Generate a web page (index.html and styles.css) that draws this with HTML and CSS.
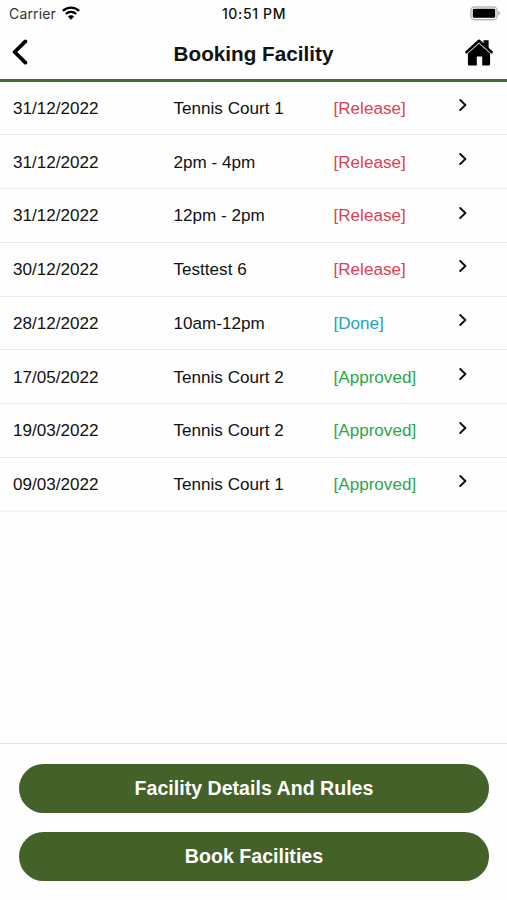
FILE: index.html
```html
<!DOCTYPE html>
<html lang="en">
<head>
    <meta charset="UTF-8">
    <meta name="viewport" content="width=device-width, initial-scale=1.0">
    <title>Booking Facility</title>
    <link rel="stylesheet" href="styles.css">
</head>
<body>

    <div class="status-bar">
        <div class="carrier">
            <span>Carrier</span>
            <svg class="wifi" viewBox="0 0 18 14" width="18" height="14">
                <path d="M.9 4.9a11.6 11.6 0 0 1 16.2 0M3.8 8a7.4 7.4 0 0 1 10.4 0" fill="none" stroke="#000" stroke-width="2.4"/>
                <path d="M5.9 10.5a4.3 4.3 0 0 1 6.2 0L9 13.7z"/>
            </svg>
        </div>
        <span class="time">10:51 PM</span>
        <svg class="battery" viewBox="0 0 31 15" width="31" height="15">
            <rect x="0.9" y="0.9" width="26.2" height="12.8" rx="3.6" fill="#fff" stroke="#b9b9b9" stroke-width="1.5"/>
            <rect x="2.8" y="2.8" width="22.4" height="9" rx="1.4"/>
            <path d="M28.2 5c1.5.5 2.2 1.3 2.2 2.3s-.7 1.8-2.2 2.3z" fill="#b9b9b9"/>
        </svg>
    </div>

    <header class="header">
        <a class="back" href="#" aria-label="Back">
            <svg viewBox="0 0 16 26" width="16" height="26">
                <path d="M13.4 2.4L2.6 13l10.8 10.6" fill="none" stroke="#000" stroke-width="3.8" stroke-linecap="round" stroke-linejoin="round"/>
            </svg>
        </a>
        <h1>Booking Facility</h1>
        <a class="home" href="#" aria-label="Home">
            <svg viewBox="0 0 28 27" width="28" height="27">
                <path d="M2.9 13.8L14 4l11.1 9.8v11.4q0 1.2-1.2 1.2h-6.7v-8.8h-5.4v8.8H4.1q-1.2 0-1.2-1.2z"/>
                <path d="M1.6 14.6L14 3.5l12.4 11.1" fill="none" stroke="#ccc" stroke-width="1.8"/>
                <path d="M18.6 1.2h5v9.2l-5-4.2z"/>
                <path d="M1.4 13.1L14 1.7l12.6 11.4" fill="none" stroke="#000" stroke-width="2.5" stroke-linecap="round" stroke-linejoin="round"/>
            </svg>
        </a>
    </header>

    <main class="bookings" id="bookings"></main>

    <footer class="actions">
        <button type="button">Facility Details And Rules</button>
        <button type="button">Book Facilities</button>
    </footer>

    <script>
        const bookings = [
            { date: '31/12/2022', name: 'Tennis Court 1', status: 'Release' },
            { date: '31/12/2022', name: '2pm - 4pm', status: 'Release' },
            { date: '31/12/2022', name: '12pm - 2pm', status: 'Release' },
            { date: '30/12/2022', name: 'Testtest 6', status: 'Release' },
            { date: '28/12/2022', name: '10am-12pm', status: 'Done' },
            { date: '17/05/2022', name: 'Tennis Court 2', status: 'Approved' },
            { date: '19/03/2022', name: 'Tennis Court 2', status: 'Approved' },
            { date: '09/03/2022', name: 'Tennis Court 1', status: 'Approved' }
        ];

        const list = document.getElementById('bookings');

        bookings.forEach(booking => {
            const row = document.createElement('div');
            row.className = 'booking';
            row.innerHTML = `
                <span>${booking.date}</span>
                <span>${booking.name}</span>
                <span class="${booking.status.toLowerCase()}">[${booking.status}]</span>
                <svg class="chevron" viewBox="0 0 8 12" width="8" height="12">
                    <path d="M1.2 1l5.2 5-5.2 5" fill="none" stroke="#111" stroke-width="1.9" stroke-linecap="round" stroke-linejoin="round"/>
                </svg>
            `;
            list.appendChild(row);
        });
    </script>

</body>
</html>
```

FILE: styles.css
```css
* {
    box-sizing: border-box;
}

body {
    margin: 0;
    height: 100vh;
    display: flex;
    flex-direction: column;
    font-family: "Liberation Sans", Arial, sans-serif;
    color: #111;
    background-color: #fefefe;
    overflow: hidden;
}

.status-bar {
    display: grid;
    grid-template-columns: 1fr auto 1fr;
    align-items: center;
    height: 27px;
    padding: 0 6px 0 9px;
    font-family: Inter, sans-serif;
    font-size: 14px;
}

.carrier {
    display: flex;
    align-items: center;
    gap: 6px;
    color: #333;
    letter-spacing: 0.15px;
}

.wifi {
    margin-bottom: 1px;
}

.time {
    padding-right: 2px;
    font-weight: 500;
    letter-spacing: 0.65px;
}

.battery {
    justify-self: end;
}

.header {
    display: grid;
    grid-template-columns: 1fr auto 1fr;
    align-items: center;
    height: 54.6px;
    padding: 0 14px 1px 12px;
    border-bottom: 3px solid #4b6a31;
}

.header svg {
    display: block;
}

.home {
    justify-self: end;
}

h1 {
    margin: 0;
    padding: 3px 0 0 2px;
    font-size: 20.7px;
    line-height: 24px;
}

.booking {
    display: grid;
    grid-template-columns: 160.5px 160px 125px 8px;
    align-items: center;
    height: 53.75px;
    padding: 2px 13px 0;
    font-size: 17.1px;
    border-bottom: 1px solid #e9e9e9;
}

.booking:last-child {
    border-bottom: 2px solid #f3f3f3;
}

.chevron {
    margin-bottom: 7.5px;
}

.release {
    color: #dc4055;
}

.done {
    color: #20a2bd;
}

.approved {
    color: #2ba74a;
}

.actions {
    display: flex;
    flex-direction: column;
    gap: 19.5px;
    margin-top: auto;
    padding: 20px 18px 19px 19px;
    border-top: 1px solid #e0e0e0;
}

button {
    height: 49px;
    padding: 0;
    border: none;
    border-radius: 25px;
    background-color: #446129;
    color: white;
    font-family: inherit;
    font-size: 19.6px;
    font-weight: bold;
    cursor: pointer;
}
```
